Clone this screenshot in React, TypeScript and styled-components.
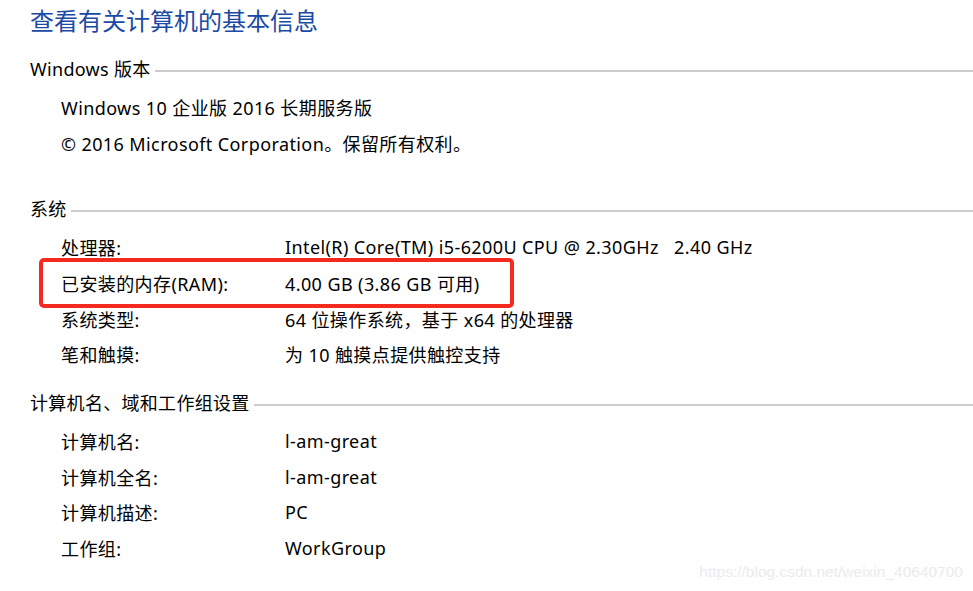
import React from 'react';
import styled, { createGlobalStyle } from 'styled-components';

const GlobalStyle = createGlobalStyle`
  html, body {
    margin: 0;
    padding: 0;
    background: #ffffff;
  }
  body {
    font-family: 'Segoe UI', 'Noto Sans', 'Noto Sans CJK SC', sans-serif;
    color: #000;
    overflow: hidden;
  }
`;

const Page = styled.div`
  position: relative;
  width: 973px;
  height: 591px;
  padding-left: 30px;
  box-sizing: border-box;
  overflow: hidden;
`;

const Title = styled.h1`
  margin: 0;
  height: 40px;
  line-height: 40px;
  font-size: 24px;
  font-weight: 400;
  color: #1b4aa6;
  font-family: 'Noto Sans CJK SC', sans-serif;
`;

const Section = styled.section<{ $top: number }>`
  margin-top: ${(p) => p.$top}px;
`;

const Header = styled.div`
  display: flex;
  align-items: center;
  height: 30px;
  font-size: 18px;
  letter-spacing: 0.3px;
  white-space: nowrap;
  &::after {
    content: '';
    flex: 1;
    height: 2px;
    margin: 6px 0 0 4px;
    background: #cccccc;
  }
`;

const Rows = styled.div`
  padding: 6px 0 0 31px;
`;

const Row = styled.div`
  position: relative;
  display: flex;
  align-items: center;
  height: 35.7px;
  font-size: 18px;
  letter-spacing: 0.4px;
  white-space: nowrap;
`;

const Label = styled.span`
  width: 224px;
  flex: none;
`;

const Value = styled.span``;

const Highlight = styled.div`
  position: absolute;
  left: -22px;
  top: -7px;
  width: 475px;
  height: 50px;
  border: 4px solid #f42a1e;
  border-radius: 5px;
  box-sizing: border-box;
  pointer-events: none;
`;

const Watermark = styled.div`
  position: absolute;
  right: 10px;
  bottom: 10px;
  font-family: 'Liberation Sans', Arial, sans-serif;
  font-size: 15.5px;
  color: #ebebeb;
`;

type Item = { label?: string; value: string; mark?: boolean };

const sections: { title: string; top: number; items: Item[] }[] = [
  {
    title: 'Windows 版本',
    top: 13,
    items: [
      { value: 'Windows 10 企业版 2016 长期服务版' },
      { value: '© 2016 Microsoft Corporation。保留所有权利。' },
    ],
  },
  {
    title: '系统',
    top: 33,
    items: [
      { label: '处理器:', value: 'Intel(R) Core(TM) i5-6200U CPU @ 2.30GHz\u00a0\u00a0\u00a02.40 GHz' },
      { label: '已安装的内存(RAM):', value: '4.00 GB (3.86 GB 可用)', mark: true },
      { label: '系统类型:', value: '64 位操作系统，基于 x64 的处理器' },
      { label: '笔和触摸:', value: '为 10 触摸点提供触控支持' },
    ],
  },
  {
    title: '计算机名、域和工作组设置',
    top: 15,
    items: [
      { label: '计算机名:', value: 'l-am-great' },
      { label: '计算机全名:', value: 'l-am-great' },
      { label: '计算机描述:', value: 'PC' },
      { label: '工作组:', value: 'WorkGroup' },
    ],
  },
];

export default function App() {
  return (
    <Page>
      <GlobalStyle />
      <Title>查看有关计算机的基本信息</Title>
      {sections.map((s) => (
        <Section key={s.title} $top={s.top}>
          <Header>{s.title}</Header>
          <Rows>
            {s.items.map((it, i) => (
              <Row key={i}>
                {it.label !== undefined && <Label>{it.label}</Label>}
                <Value>{it.value}</Value>
                {it.mark && <Highlight />}
              </Row>
            ))}
          </Rows>
        </Section>
      ))}
      <Watermark>https://blog.csdn.net/weixin_40640700</Watermark>
    </Page>
  );
}
